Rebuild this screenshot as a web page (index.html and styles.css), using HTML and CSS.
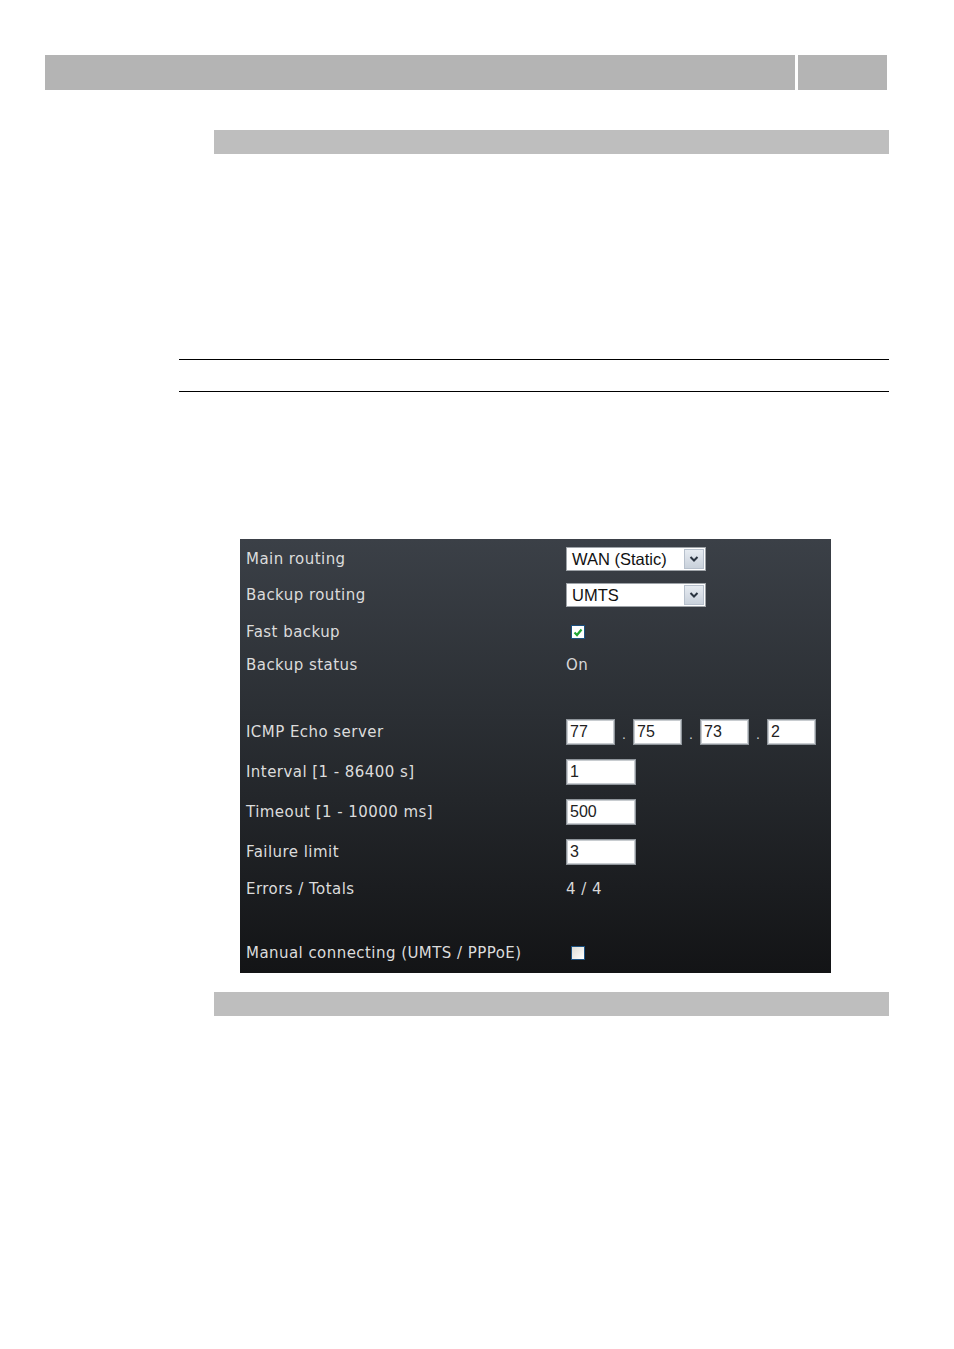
FILE: index.html
```html
<!DOCTYPE html>
<html>
<head>
<meta charset="utf-8">
<link rel="stylesheet" href="styles.css">
</head>
<body>
<div class="page">
  <div class="header">
    <div class="hbar-main"></div>
    <div class="hbar-side"></div>
  </div>
  <div class="section-bar top-section"></div>
  <div class="rule-box"></div>
  <div class="panel">
    <div class="row r1">
      <div class="label">Main routing</div>
      <div class="value">
        <div class="select"><span class="sel-text">WAN (Static)</span><span class="sel-btn"><svg width="10" height="8" viewBox="0 0 10 8"><path d="M1.5 2 L5 5.5 L8.5 2" fill="none" stroke="#2a3440" stroke-width="2"/></svg></span></div>
      </div>
    </div>
    <div class="row r2">
      <div class="label">Backup routing</div>
      <div class="value">
        <div class="select"><span class="sel-text">UMTS</span><span class="sel-btn"><svg width="10" height="8" viewBox="0 0 10 8"><path d="M1.5 2 L5 5.5 L8.5 2" fill="none" stroke="#2a3440" stroke-width="2"/></svg></span></div>
      </div>
    </div>
    <div class="row r3">
      <div class="label">Fast backup</div>
      <div class="value"><span class="checkbox checked"><svg width="10" height="9" viewBox="0 0 10 9"><path d="M1.5 4.5 L4 7 L8.5 1.5" fill="none" stroke="#21a635" stroke-width="2.2"/></svg></span></div>
    </div>
    <div class="row r4">
      <div class="label">Backup status</div>
      <div class="value text">On</div>
    </div>
    <div class="spacer s1"></div>
    <div class="row r5">
      <div class="label">ICMP Echo server</div>
      <div class="value ip">
        <span class="input ip-box">77</span><span class="dot">.</span><span class="input ip-box">75</span><span class="dot">.</span><span class="input ip-box">73</span><span class="dot">.</span><span class="input ip-box">2</span>
      </div>
    </div>
    <div class="row r5">
      <div class="label">Interval [1 - 86400 s]</div>
      <div class="value"><span class="input num-box">1</span></div>
    </div>
    <div class="row r5">
      <div class="label">Timeout [1 - 10000 ms]</div>
      <div class="value"><span class="input num-box">500</span></div>
    </div>
    <div class="row r5">
      <div class="label">Failure limit</div>
      <div class="value"><span class="input num-box">3</span></div>
    </div>
    <div class="row r6">
      <div class="label">Errors / Totals</div>
      <div class="value text">4 / 4</div>
    </div>
    <div class="spacer s2"></div>
    <div class="row r6">
      <div class="label">Manual connecting (UMTS / PPPoE)</div>
      <div class="value"><span class="checkbox"></span></div>
    </div>
  </div>
  <div class="section-bar bottom-section"></div>
</div>
</body>
</html>
```
FILE: styles.css
```css
html, body {
  margin: 0;
  padding: 0;
  background: #ffffff;
}
.page {
  width: 954px;
  height: 1349px;
  padding-top: 55px;
  box-sizing: border-box;
}
.header {
  display: flex;
  gap: 3px;
  margin-left: 45px;
  height: 35px;
}
.hbar-main {
  width: 750px;
  background: #b4b4b4;
}
.hbar-side {
  width: 89px;
  background: #b4b4b4;
}
.section-bar {
  margin-left: 214px;
  width: 675px;
  height: 24px;
  background: #bebebe;
}
.top-section {
  margin-top: 40px;
}
.rule-box {
  margin-top: 205px;
  margin-left: 179px;
  width: 710px;
  height: 31px;
  border-top: 1px solid #000;
  border-bottom: 1px solid #000;
}
.panel {
  margin-top: 147px;
  margin-left: 240px;
  width: 591px;
  height: 434px;
  box-sizing: border-box;
  padding-left: 6px;
  padding-top: 1px;
  background: linear-gradient(#3b4047 0%, #2b2f34 40%, #131416 100%);
  font-family: "DejaVu Sans", sans-serif;
  font-size: 15px;
  color: #dcdcdc;
}
.row {
  display: grid;
  grid-template-columns: 320px 1fr;
  align-items: center;
}
.r1 { height: 37px; }
.r2 { height: 36px; }
.r3 { height: 38px; }
.r4 { height: 28px; }
.r5 { height: 40px; }
.r6 { height: 34px; }
.s1 { height: 33px; }
.s2 { height: 30px; }
.label {
  white-space: nowrap;
  letter-spacing: 0.45px;
}
.value {
  display: flex;
  align-items: center;
}
.value.text {
  color: #d8d8d8;
  letter-spacing: 0.45px;
}
.select {
  display: flex;
  width: 140px;
  height: 24px;
  box-sizing: border-box;
  background: #fff;
  border: 1px solid #9ea3a8;
}
.sel-text {
  flex: 1;
  padding-left: 5px;
  font-family: "Liberation Sans", Arial, sans-serif;
  font-size: 16.5px;
  line-height: 22px;
  color: #111;
}
.sel-btn {
  width: 20px;
  margin: 1px;
  box-sizing: border-box;
  border: 1px solid #b7c0cc;
  background: linear-gradient(#e6ebf1, #c9d1db);
  display: flex;
  align-items: center;
  justify-content: center;
}
.checkbox {
  width: 14px;
  height: 14px;
  margin-left: 5px;
  box-sizing: border-box;
  border: 1px solid #1c5180;
  background: linear-gradient(135deg, #dcdcd6, #ffffff);
  display: flex;
  align-items: center;
  justify-content: center;
}
.checkbox.checked {
  background: #ffffff;
  margin-left: 5px;
}
.input {
  display: inline-block;
  height: 26px;
  box-sizing: border-box;
  background: #fff;
  border: 1px solid #8f959b;
  box-shadow: inset 0 0 0 1px #c8ccd0;
  font-family: "Liberation Sans", Arial, sans-serif;
  font-size: 16px;
  line-height: 24px;
  padding-left: 3px;
  color: #222;
}
.ip-box {
  width: 49px;
}
.num-box {
  width: 70px;
}
.dot {
  width: 18px;
  text-align: center;
  font-family: "Liberation Sans", Arial, sans-serif;
  font-size: 14px;
  color: #cfcfcf;
  padding-top: 4px;
}
.bottom-section {
  margin-top: 19px;
}
```
